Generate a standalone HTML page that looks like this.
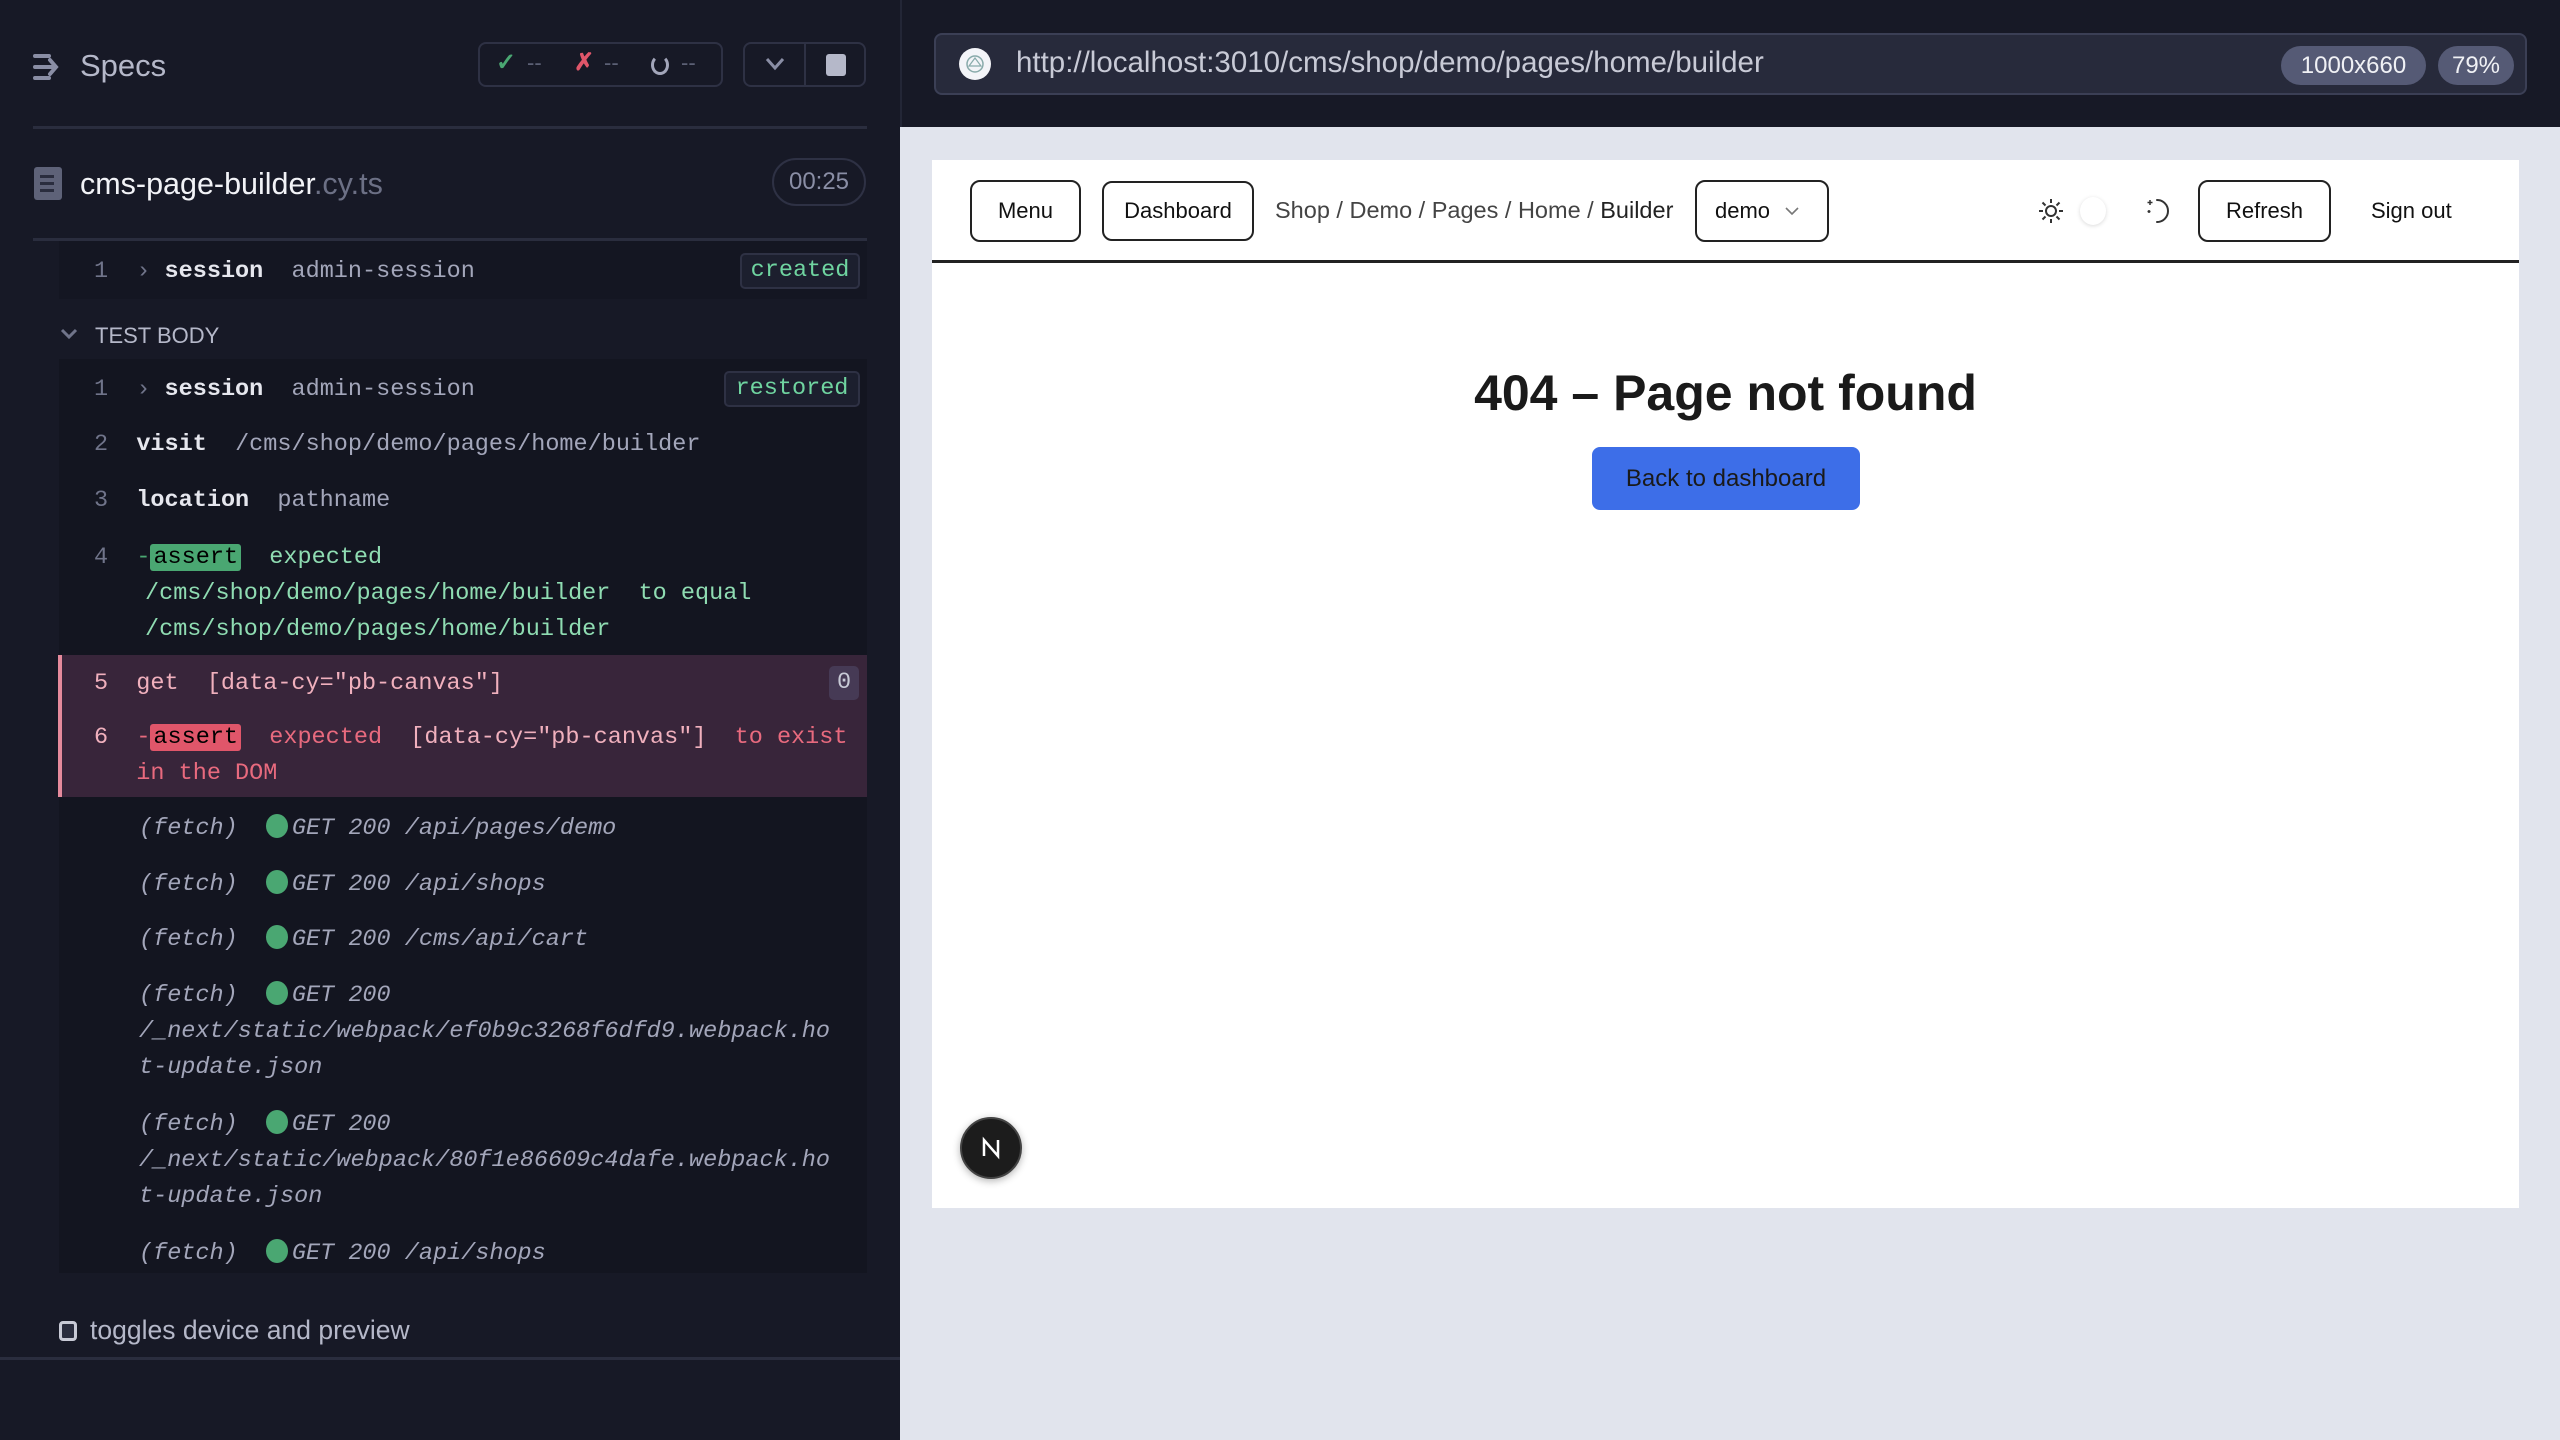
<!DOCTYPE html>
<html><head><meta charset="utf-8"><style>
*{box-sizing:border-box;margin:0;padding:0}
body{width:2560px;height:1440px;overflow:hidden;background:#171926;font-family:"Liberation Sans",sans-serif;position:relative}
.a{position:absolute}
.m{font-family:"Liberation Mono","DejaVu Sans Mono",monospace;font-size:23.5px;white-space:pre;line-height:36px}
.num{color:#70748a}
.w{color:#e6e7ee;font-weight:bold}
.g{color:#a3a6ba}
.f{color:#a3a6ba;font-style:italic}
.dot{display:inline-block;width:22px;height:24px;border-radius:50%;background:#4aa772;vertical-align:-4px;margin-right:4px}
.btn{position:absolute;border:2px solid #222;border-radius:10px;background:#fff;color:#111;font-size:22px;display:flex;align-items:center;justify-content:center}
</style></head><body>
<div class="a" style="left:0;top:0;width:900px;height:1440px;background:#171926"></div>
<svg class="a" style="left:32px;top:52px" width="32" height="30" viewBox="0 0 32 30"><g stroke="#8a8ea5" stroke-width="4" stroke-linecap="round" fill="none"><path d="M3 4h14M3 15h20M3 26h14M18 8l6 7-6 7"/></g></svg>
<div class="a" style="left:80px;top:48px;font-size:31px;color:#b5b8c9">Specs</div>
<div class="a" style="left:478px;top:42px;width:245px;height:45px;border:2px solid #2e3144;border-radius:8px"></div>
<div class="a" style="left:496px;top:48px;font-size:24px;color:#4aa772;font-weight:bold">✓</div>
<div class="a" style="left:527px;top:50px;font-size:22px;color:#5c6075">--</div>
<div class="a" style="left:574px;top:48px;font-size:24px;color:#e0566a;font-weight:bold">✗</div>
<div class="a" style="left:604px;top:50px;font-size:22px;color:#5c6075">--</div>
<div class="a" style="left:651px;top:55px;width:18px;height:20px;border:3px solid #a3a6ba;border-top-color:transparent;border-radius:50%"></div>
<div class="a" style="left:681px;top:50px;font-size:22px;color:#5c6075">--</div>
<div class="a" style="left:743px;top:42px;width:123px;height:45px;border:2px solid #2e3144;border-radius:8px"></div>
<div class="a" style="left:804px;top:44px;width:2px;height:41px;background:#2e3144"></div>
<svg class="a" style="left:764px;top:56px" width="22" height="16"><path d="M3 3l8 9 8-9" stroke="#8a8ea5" stroke-width="3" fill="none"/></svg>
<div class="a" style="left:826px;top:54px;width:20px;height:22px;background:#b5b8c9;border-radius:3px"></div>
<div class="a" style="left:33px;top:126px;width:834px;height:3px;background:#2a2d3e"></div>
<div class="a" style="left:34px;top:167px;width:28px;height:33px;background:#5e6278;border-radius:3px"></div>
<div class="a" style="left:40px;top:175px;width:14px;height:3px;background:#2a2d3e;box-shadow:0 7px 0 #2a2d3e,0 14px 0 #2a2d3e"></div>
<div class="a" style="left:80px;top:167px;font-size:30.5px;color:#f2f3f7">cms-page-builder<span style="color:#6c7085">.cy.ts</span></div>
<div class="a" style="left:772px;top:158px;width:94px;height:48px;border:2px solid #2e3144;border-radius:24px;color:#8a8ea5;font-size:24px;display:flex;align-items:center;justify-content:center">00:25</div>
<div class="a" style="left:33px;top:238px;width:834px;height:3px;background:#2a2d3e"></div>
<div class="a" style="left:59px;top:241px;width:808px;height:58px;background:#141622"></div>
<div class="a m" style="left:94px;top:254px"><span class="num">1</span>  <span class="num">›</span> <span class="w">session</span>  <span class="g">admin-session</span></div>
<div class="a m" style="left:740px;top:253px;width:120px;height:36px;border:2px solid #2e3144;border-radius:5px;background:#1c1f2e;color:#6fd4a0;text-align:center;line-height:32px">created</div>
<svg class="a" style="left:60px;top:327px" width="18" height="14"><path d="M2 3l7 7 7-7" stroke="#70748a" stroke-width="3" fill="none"/></svg>
<div class="a" style="left:95px;top:323px;font-size:22px;color:#b5b8c9">TEST BODY</div>
<div class="a" style="left:59px;top:359px;width:808px;height:914px;background:#131520"></div>
<div class="a m" style="left:94px;top:372px"><span class="num">1</span>  <span class="num">›</span> <span class="w">session</span>  <span class="g">admin-session</span></div>
<div class="a m" style="left:724px;top:371px;width:136px;height:36px;border:2px solid #2e3144;border-radius:5px;background:#1c1f2e;color:#6fd4a0;text-align:center;line-height:32px">restored</div>
<div class="a m" style="left:94px;top:427px"><span class="num">2</span>  <span class="w">visit</span>  <span class="g">/cms/shop/demo/pages/home/builder</span></div>
<div class="a m" style="left:94px;top:483px"><span class="num">3</span>  <span class="w">location</span>  <span class="g">pathname</span></div>
<div class="a m" style="left:94px;top:540px"><span class="num">4</span>  <span style="color:#4aa772">-</span><span style="background:#4aa772;color:#000;border-radius:3px;padding:0 3px">assert</span>  <span style="color:#8fdcb2">expected</span></div>
<div class="a m" style="left:145px;top:576px;color:#8fdcb2">/cms/shop/demo/pages/home/builder  to equal
/cms/shop/demo/pages/home/builder</div>
<div class="a" style="left:58px;top:655px;width:809px;height:142px;background:#38253a;border-left:4px solid #e58a9c"></div>
<div class="a m" style="left:94px;top:666px;color:#f0b0bd">5  get  [data-cy="pb-canvas"]</div>
<div class="a m" style="left:829px;top:666px;width:30px;height:34px;background:#463a55;border-radius:5px;color:#c8cad6;text-align:center;line-height:34px">0</div>
<div class="a m" style="left:94px;top:720px;color:#e86a7e"><span style="color:#f0b0bd">6</span>  -<span style="background:#e0566a;color:#000;border-radius:3px;padding:0 3px">assert</span>  expected  <span style="color:#f0b0bd">[data-cy="pb-canvas"]</span>  to exist
   in the DOM</div>
<div class="a m f" style="left:139px;top:811px">(fetch)  <span class="dot"></span>GET 200 /api/pages/demo</div>
<div class="a m f" style="left:139px;top:867px">(fetch)  <span class="dot"></span>GET 200 /api/shops</div>
<div class="a m f" style="left:139px;top:922px">(fetch)  <span class="dot"></span>GET 200 /cms/api/cart</div>
<div class="a m f" style="left:139px;top:978px">(fetch)  <span class="dot"></span>GET 200
/_next/static/webpack/ef0b9c3268f6dfd9.webpack.ho
t-update.json</div>
<div class="a m f" style="left:139px;top:1107px">(fetch)  <span class="dot"></span>GET 200
/_next/static/webpack/80f1e86609c4dafe.webpack.ho
t-update.json</div>
<div class="a m f" style="left:139px;top:1236px">(fetch)  <span class="dot"></span>GET 200 /api/shops</div>
<div class="a" style="left:59px;top:1321px;width:18px;height:20px;border:3px solid #c8cad6;border-radius:4px;background:#2a2d3e"></div>
<div class="a" style="left:90px;top:1315px;font-size:26.5px;color:#b5b8c9">toggles device and preview</div>
<div class="a" style="left:0;top:1357px;width:900px;height:3px;background:#2a2d3e"></div>
<div class="a" style="left:900px;top:0;width:1660px;height:127px;background:#171926;border-left:2px solid #232636"></div>
<div class="a" style="left:900px;top:127px;width:1660px;height:1313px;background:#e1e4ed"></div>
<div class="a" style="left:934px;top:33px;width:1593px;height:62px;background:#272a3b;border:2px solid #3b3f55;border-radius:8px"></div>
<div class="a" style="left:959px;top:48px;width:32px;height:32px;border-radius:50%;background:#f3f4f8"></div>
<svg class="a" style="left:963px;top:52px" width="24" height="24"><circle cx="12" cy="12" r="8" fill="none" stroke="#8aa" stroke-width="1.5"/><path d="M6 14l6-8 6 8z" fill="none" stroke="#8aa" stroke-width="1.2"/></svg>
<div class="a" style="left:1016px;top:46px;font-size:29.5px;color:#c8cad6">http://localhost:3010/cms/shop/demo/pages/home/builder</div>
<div class="a" style="left:2281px;top:46px;width:145px;height:39px;background:#555a75;border-radius:20px;color:#f0f1f5;font-size:24px;display:flex;align-items:center;justify-content:center">1000x660</div>
<div class="a" style="left:2438px;top:46px;width:76px;height:39px;background:#555a75;border-radius:20px;color:#f0f1f5;font-size:24px;display:flex;align-items:center;justify-content:center">79%</div>
<div class="a" style="left:932px;top:160px;width:1587px;height:1048px;background:#fff"></div>
<div class="a" style="left:932px;top:260px;width:1587px;height:3px;background:#222"></div>
<div class="btn" style="left:970px;top:180px;width:111px;height:62px">Menu</div>
<div class="btn" style="left:1102px;top:181px;width:152px;height:60px">Dashboard</div>
<div class="a" style="left:1275px;top:197px;font-size:23.5px;color:#444">Shop / Demo / Pages / Home / <span style="color:#222">Builder</span></div>
<div class="btn" style="left:1695px;top:180px;width:134px;height:62px;justify-content:flex-start;padding-left:18px">demo<svg style="margin-left:14px" width="16" height="10"><path d="M2 2l6 6 6-6" stroke="#777" stroke-width="1.6" fill="none"/></svg></div>
<svg class="a" style="left:2037px;top:197px" width="28" height="28" viewBox="0 0 28 28"><circle cx="14" cy="14" r="5" fill="none" stroke="#333" stroke-width="2"/><g stroke="#333" stroke-width="2"><path d="M14 2v4M14 22v4M2 14h4M22 14h4M5.5 5.5l3 3M19.5 19.5l3 3M5.5 22.5l3-3M19.5 8.5l3-3"/></g></svg>
<div class="a" style="left:2080px;top:197px;width:26px;height:28px;border-radius:50%;background:#fff;box-shadow:0 1px 4px rgba(0,0,0,.15)"></div>
<svg class="a" style="left:2144px;top:196px" width="28" height="30" viewBox="0 0 28 30"><path d="M13 4a11 11 0 0 1 0 22a8 8 0 0 0 0-22z" fill="none" stroke="#333" stroke-width="2" stroke-linejoin="round"/><path d="M6 4v5M3.5 6.5h5M5 14v3M3.5 15.5h3" stroke="#333" stroke-width="1.5"/></svg>
<div class="btn" style="left:2198px;top:180px;width:133px;height:62px">Refresh</div>
<div class="a" style="left:2371px;top:198px;font-size:22px;color:#111">Sign out</div>
<div class="a" style="left:932px;top:364px;width:1587px;text-align:center;font-size:50px;font-weight:bold;color:#1a1a1a">404 – Page not found</div>
<div class="a" style="left:1592px;top:447px;width:268px;height:63px;background:#3d6ee8;border-radius:8px;color:#1a1a1a;font-size:24px;display:flex;align-items:center;justify-content:center">Back to dashboard</div>
<div class="a" style="left:960px;top:1117px;width:62px;height:62px;border-radius:50%;background:#1c1c1c;box-shadow:0 2px 8px rgba(0,0,0,.3);border:2px solid #444"></div>
<svg class="a" style="left:979px;top:1136px" width="24" height="24"><path d="M5 20V4l14 16V4" stroke="#fff" stroke-width="2.5" fill="none"/></svg>
</body></html>
